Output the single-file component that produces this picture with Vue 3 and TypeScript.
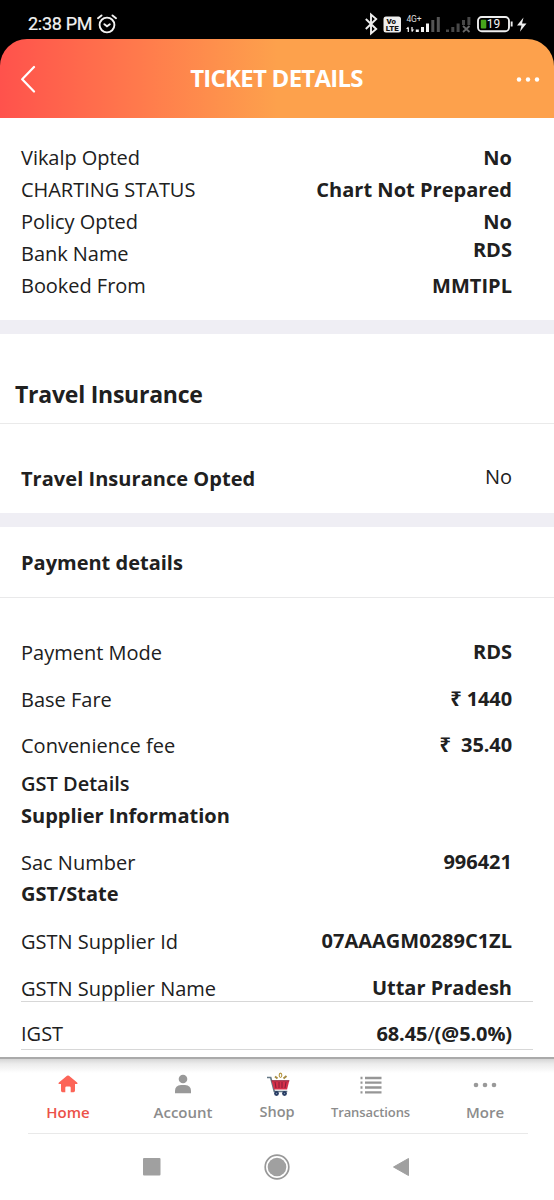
<script setup lang="ts">
interface BookingRow {
  label: string
  value: string
  raised?: boolean
}

const bookingRows: BookingRow[] = [
  { label: 'Vikalp Opted', value: 'No' },
  { label: 'CHARTING STATUS', value: 'Chart Not Prepared' },
  { label: 'Policy Opted', value: 'No' },
  { label: 'Bank Name', value: 'RDS', raised: true },
  { label: 'Booked From', value: 'MMTIPL' },
]
</script>

<template>
  <main class="phone">
    <header class="status">
      <div class="clock">
        <span>2:38 PM</span>
        <svg width="20" height="20" viewBox="0 0 20 20" fill="none" stroke="#f2f2f2" stroke-width="1.9" stroke-linecap="round">
          <circle cx="10" cy="11" r="7.4" /><path d="M7.4 10.200 10 12.300l2.800-2.100M1 4.200 4.500 1.400M19 4.200l-3.500-2.800" />
        </svg>
      </div>
      <svg class="indicators" width="170" height="24" viewBox="0 0 170 24">
        <path d="m.8 7 10.400 10-5.200 4.500v-19L11.200 7 .8 17" fill="none" stroke="#eee" stroke-width="1.900" />
        <rect x="18.500" y="4.500" width="17.500" height="16" rx="2.500" fill="#eee" />
        <text x="21.500" y="12" font-size="8" font-weight="900" fill="#111" textLength="9.500" lengthAdjust="spacingAndGlyphs">Vo</text>
        <text x="20.800" y="19" font-size="8" font-weight="900" fill="#111" textLength="13" lengthAdjust="spacingAndGlyphs">LTE</text>
        <text x="41.500" y="9.500" font-size="8.500" fill="#ddd" textLength="15">4G+</text>
        <path d="M43.300 20v-4.500M47 15v4.500" fill="none" stroke="#eee" stroke-width="1.300" />
        <path d="m41 17 2.300-2.500V17zM49.300 17.500 47 20v-2.500zM50.800 17.500h3V20h-3zM56 15h3v5h-3zM61 11.500h3V20h-3z" fill="#f4f4f4" />
        <path d="M66.300 8h3v12h-3zM71.800 5h3v15h-3z" fill="#555" />
        <path d="M81 17.500h3V20h-3zM86.300 15h3v5h-3zM91.600 11.500h3V20h-3zM97 8h3v5h-3zM102.400 5h3v8h-3z" fill="#484848" />
        <path d="m98 14 6.500 6m0-6L98 20" stroke="#666" stroke-width="1.800" />
        <rect x="113" y="5" width="31" height="14.300" rx="3.800" fill="none" stroke="#eee" stroke-width="1.900" />
        <path d="M145.700 9.500h1.900v5h-1.900z" fill="#eee" />
        <rect x="115.800" y="7.800" width="5.500" height="8.700" rx="1" fill="#46a51b" />
        <text x="121.800" y="16.300" font-size="12" fill="#f5f5f5" textLength="13.500">19</text>
        <path d="m158.500 5.500-6.500 8h4.500l-1.600 6.300 6.600-8.300H157z" fill="#eee" />
      </svg>
    </header>

    <div class="bar-back">
      <div class="titlebar">
        <svg width="18" height="28" viewBox="0 0 18 28" fill="none" stroke="#fff" stroke-width="2.200" stroke-linecap="round" stroke-linejoin="round"><path d="M14 2 2.200 14.200 14 26.500" /></svg>
        <h1>TICKET DETAILS</h1>
        <svg width="24" height="6" viewBox="0 0 24 6" fill="#fff"><circle cx="3" cy="3.500" r="2.200" /><circle cx="12" cy="3.500" r="2.200" /><circle cx="21" cy="3.500" r="2.200" /></svg>
      </div>
    </div>

    <section class="booking">
      <div v-for="row in bookingRows" :key="row.label" class="row">
        <span>{{ row.label }}</span><b :class="{ raised: row.raised }">{{ row.value }}</b>
      </div>
    </section>
    <div class="band"></div>
    <h2>Travel Insurance</h2>
    <div class="row insurance"><b>Travel Insurance Opted</b><span>No</span></div>
    <div class="band"></div>
    <h3>Payment details</h3>

    <section class="payment">
      <div class="row fare"><span>Payment Mode</span><b>RDS</b></div>
      <div class="row fare"><span>Base Fare</span><b class="rupee">₹ 1440</b></div>
      <div class="row fare"><span>Convenience fee</span><b class="rupee">₹&nbsp; 35.40</b></div>
      <div class="row gst"><strong class="semi">GST Details</strong></div>
      <div class="row"><strong>Supplier Information</strong></div>
      <div class="row sac"><span>Sac Number</span><b>996421</b></div>
      <div class="row state"><strong>GST/State</strong></div>
      <div class="row supplier"><span>GSTN Supplier Id</span><b>07AAAGM0289C1ZL</b></div>
      <div class="row name"><span>GSTN Supplier Name</span><b>Uttar Pradesh</b></div>
      <div class="row tax"><span>IGST</span><b>68.45<i>/</i>(@5.0%)</b></div>
    </section>

    <nav class="dock">
      <div class="tabs">
        <a class="active">
          <svg width="20" height="18" viewBox="0 0 20 18" fill="#fc6558"><path d="M9 .8q1-.8 2 0l8.100 6.800q1 1.400-.5 1.500H17v6.400q0 1.700-1.500 1.700h-2.800v-4.500q0-1.200-1.200-1.200h-3q-1.200 0-1.200 1.200v4.500H4.500Q3 17.200 3 15.500V9.100H1.400Q-.1 9 .9 7.600z" /></svg>
          <span>Home</span>
        </a>
        <a>
          <svg width="18" height="20" viewBox="0 0 18 20" fill="#999"><circle cx="9" cy="5" r="4.300" /><path d="M1 19.200v-2.300q0-5.700 6-6h4q6 .3 6 6v2.300z" /></svg>
          <span>Account</span>
        </a>
        <a>
          <svg class="cart" width="25" height="25" viewBox="0 0 25 25">
            <path d="M1 5.500h3.700l3.600 14h13" fill="none" stroke="#657986" stroke-width="1.700" />
            <path d="M5.500 8.500h17.800l-2.200 9H8z" fill="#d52f49" />
            <path d="m9 10 1 6m3-6v6m3-6v6m4-6-1 6" stroke="#821e3b" stroke-width="1" />
            <path d="M5.500 8.800h17.800" stroke="#892941" />
            <path d="m9 4.500 2.500 2M20.500 4l-3 2.500" stroke="#a58b43" stroke-width="2" />
            <ellipse cx="14.500" cy="3.300" rx="1.300" ry="2.200" fill="none" stroke="#b5963f" stroke-width="1.100" />
            <circle cx="10.500" cy="21.500" r="2.400" fill="#263a62" /><circle cx="18.500" cy="21.500" r="2.400" fill="#263a62" />
            <circle cx="10.500" cy="21.500" r=".7" fill="#7892ad" /><circle cx="18.500" cy="21.500" r=".7" fill="#7892ad" />
          </svg>
          <span class="compact">Shop</span>
        </a>
        <a>
          <svg class="list" width="22" height="18" viewBox="0 0 22 18" stroke="#969696" stroke-width="2.300"><path d="M.5 2h2m2.500 0h16.500M.5 6.700h2m2.500 0h16.500M.5 11.500h2m2.500 0h16.500M.5 16.300h2m2.500 0h16.500" /></svg>
          <span class="small">Transactions</span>
        </a>
        <a>
          <svg class="list" width="24" height="6" viewBox="0 0 24 6" fill="#999"><circle cx="3" cy="3" r="2.300" /><circle cx="12" cy="3" r="2.300" /><circle cx="21" cy="3" r="2.300" /></svg>
          <span>More</span>
        </a>
      </div>
    </nav>
    <footer class="system">
      <svg width="18" height="18"><rect width="17.500" height="17.500" rx="1" fill="#a0a0a0" /></svg>
      <svg width="26" height="26"><circle cx="13" cy="13" r="11.800" fill="none" stroke="#989898" stroke-width="1.700" /><circle cx="13" cy="13" r="9.300" fill="#a0a0a0" /></svg>
      <svg class="back" width="18" height="20"><path d="M16.500 1.500v17L1.500 10z" fill="#a0a0a0" stroke="#a0a0a0" stroke-linejoin="round" /></svg>
    </footer>
  </main>
</template>

<style>
body { margin: 0; }
</style>
<style scoped>
* { box-sizing: border-box; }
.phone { width: 554px; height: 1200px; overflow: hidden; background: #fff; color: #202020; font: 20px/32px "Open Sans", "Noto Sans", sans-serif; display: flex; flex-direction: column; }
.phone > * { flex: none; }
.status { height: 39px; background: #000; color: #f2f2f2; display: flex; justify-content: space-between; padding: 12px 19px 0 28px; font: 18px/24px Roboto, sans-serif; }
.clock { display: flex; gap: 4px; }
.clock span { width: 65px; white-space: nowrap; letter-spacing: -.3px; -webkit-text-stroke: .2px #f2f2f2; }
.clock svg { margin-top: 2px; }
.indicators { font-family: Roboto, "Noto Sans", sans-serif; }
.bar-back { height: 79px; background: #000; }
.titlebar { height: 79px; border-radius: 27px 27px 0 0; background: linear-gradient(90deg, #ff524c 0, #ff7d4c 150px, #fda14c 277px, #fda14c 100%); display: grid; grid-template-columns: 40px 1fr 40px; align-items: center; padding: 0 14px 0 20px; }
.titlebar svg:last-child { justify-self: end; }
h1 { margin: -1px 7px 0 0; color: #fff; font-size: 24px; line-height: 32px; font-weight: 700; text-align: center; letter-spacing: -.75px; white-space: nowrap; }
.booking { height: 202px; padding-top: 24px; }
.row { height: 32px; display: flex; justify-content: space-between; align-items: center; padding: 0 42px 0 21px; white-space: nowrap; }
.row b, .row strong { font-weight: 700; }
.booking span { letter-spacing: -.04px; }
.booking b { letter-spacing: .03px; }
.raised { transform: translateY(-4px); }
.band { height: 14px; background: #efeef4; }
h2 { height: 90px; margin: 0; border-bottom: 1px solid #eaeaea; padding: 44px 15px 0; font-size: 23px; line-height: 32px; letter-spacing: -.24px; }
.insurance { height: 89px; padding-top: 21px; }
.insurance b { letter-spacing: .04px; }
.insurance span { transform: translateY(-2px); }
h3 { height: 71px; margin: 0; border-bottom: 1px solid #e9e9ea; padding: 20px 21px 0; font-size: 20px; line-height: 32px; }
.payment { height: 459px; padding-top: 32px; }
.payment .fare { height: 46.5px; }
.fare b, .sac b, .supplier b, .name b { transform: translateY(-1px); }
.rupee { letter-spacing: -.1px; }
.payment .gst { height: 30px; padding-bottom: 1px; }
.semi.semi { font-weight: 600; }
.payment .sac { height: 47px; padding-top: 15px; }
.payment .state { height: 31px; }
.payment .supplier { height: 48px; padding-top: 17px; }
.payment .name { height: 46px; padding-top: 16px; }
.payment .tax { height: 46px; padding-top: 15px; }
.name, .tax { position: relative; }
.name::after, .tax::after { content: ""; position: absolute; left: 21px; right: 21px; bottom: 2px; border-bottom: 1px solid #d7d7d7; }
.tax::after { bottom: 0; }
.tax b { letter-spacing: -.1px; }
.row i { font-style: normal; font-weight: 400; }
.dock { height: 77px; padding: 0 26px 0 28px; background: linear-gradient(#aaa 0, #aaa 1.500px, #d6d6d6 2px, #ececec 7px, #fff 16px); }
.tabs { height: 77px; border-bottom: 1px solid #e9e9e9; display: grid; grid-template-columns: 80px 150px 38px 149px 80px; color: #8c8c8c; font-size: 15px; line-height: 20px; font-weight: 600; }
.tabs a { display: grid; grid-template-rows: 28px 20px; row-gap: 4px; place-items: center; padding-top: 13px; align-content: start; }
.tabs a > span { margin-top: -1px; }
.cart { transform: translate(1px, 0); }
.list { transform: translateY(1px); }
.tabs .active { color: #ec5148; }
.small { font-size: 13px; letter-spacing: -.1px; }
.compact { font-size: 14.5px; }
.system { height: 66px; display: grid; grid-template-columns: 18px 26px 18px; gap: 103px; padding-left: 143px; align-items: center; }
.back { transform: translateX(-1px); }
</style>
